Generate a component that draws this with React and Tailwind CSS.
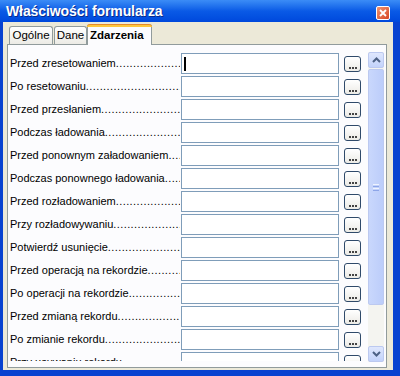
import React from "react";

const labels = [
  "Przed zresetowaniem",
  "Po resetowaniu",
  "Przed przesłaniem",
  "Podczas ładowania",
  "Przed ponownym załadowaniem",
  "Podczas ponownego ładowania",
  "Przed rozładowaniem",
  "Przy rozładowywaniu",
  "Potwierdź usunięcie",
  "Przed operacją na rekordzie",
  "Po operacji na rekordzie",
  "Przed zmianą rekordu",
  "Po zmianie rekordu",
  "Przy usuwaniu rekordu",
];

const DOTS = ".".repeat(80);

function Row({ label, first }) {
  return (
    <div className="flex items-center h-[23px] shrink-0">
      <div className="flex-1 min-w-0 flex whitespace-nowrap overflow-hidden text-[11px] text-black">
        <span>{label}</span>
        <span className="flex-1 overflow-hidden tracking-[0.4px]">{DOTS}</span>
      </div>
      <div className="ml-[1px] w-[158px] h-[21px] border border-[#7f9db9] bg-white flex items-center">
        {first && <div className="ml-[2px] w-[2px] h-[14px] bg-black" />}
      </div>
      <div className="ml-[5px] w-[17px] h-[16px] rounded-[3px] border border-[#2f4a6a] bg-gradient-to-b from-white to-[#ecebe6] flex items-end justify-center pb-[2px]">
        <div className="flex gap-[1px]">
          <div className="w-[2px] h-[2px] bg-[#444]" />
          <div className="w-[2px] h-[2px] bg-[#444]" />
          <div className="w-[2px] h-[2px] bg-[#444]" />
        </div>
      </div>
    </div>
  );
}

function Chevron({ down }) {
  return (
    <svg width="9" height="6" viewBox="0 0 9 6">
      <path
        d={down ? "M1 1 L4.5 4.5 L8 1" : "M1 5 L4.5 1.5 L8 5"}
        fill="none"
        stroke="#4d6185"
        strokeWidth="2"
      />
    </svg>
  );
}

function ScrollBar() {
  return (
    <div className="w-[16px] ml-[7px] mr-[2px] mt-[7px] mb-[5px] flex flex-col bg-[#f4f4f0]">
      <div className="h-[16px] shrink-0 rounded-[2px] border border-[#bcc9f0] bg-gradient-to-b from-[#dfe7fd] to-[#c3d3fb] flex items-center justify-center">
        <Chevron />
      </div>
      <div className="h-[236px] shrink-0 mt-[1px] rounded-[2px] border border-[#bcc9f0] bg-gradient-to-r from-[#c9d7fc] to-[#bccdfa] flex items-center justify-center">
        <div className="flex flex-col gap-[1px]">
          <div className="w-[6px] h-[1px] bg-[#eef3ff]" />
          <div className="w-[6px] h-[1px] bg-[#8da5e8]" />
          <div className="w-[6px] h-[1px] bg-[#eef3ff]" />
          <div className="w-[6px] h-[1px] bg-[#8da5e8]" />
        </div>
      </div>
      <div className="flex-1" />
      <div className="h-[16px] shrink-0 rounded-[2px] border border-[#bcc9f0] bg-gradient-to-b from-[#dfe7fd] to-[#c3d3fb] flex items-center justify-center">
        <Chevron down />
      </div>
    </div>
  );
}

export default function App() {
  return (
    <div
      className="w-[400px] h-[376px] flex flex-col bg-[#0842d0] overflow-hidden"
      style={{ fontFamily: '"Liberation Sans", Arial, sans-serif' }}
    >
      {/* title bar */}
      <div className="h-[22px] shrink-0 flex items-center pl-[6px] pr-[10px] bg-gradient-to-b from-[#3b8cf6] via-[#0a5ae6] to-[#0048dc]">
        <span className="text-white font-bold text-[14px] leading-none tracking-[-0.1px] [text-shadow:1px_1px_0_#0a2a8a]">
          Właściwości formularza
        </span>
        <div className="ml-auto mt-[3px] w-[14px] h-[14px] rounded-[2px] border border-white bg-gradient-to-br from-[#f0926e] to-[#d64320] flex items-center justify-center">
          <svg width="8" height="8" viewBox="0 0 8 8">
            <path d="M1 1 L7 7 M7 1 L1 7" stroke="white" strokeWidth="1.8" />
          </svg>
        </div>
      </div>

      {/* body */}
      <div className="flex-1 ml-[3px] mr-[7px] mb-[6px] bg-[#ece9d8] flex flex-col min-h-0">
        {/* tabs */}
        <div className="h-[22px] shrink-0 flex items-end pl-[6px] relative z-10 text-[11.5px] text-black">
          <div className="h-[18px] w-[44px] border border-b-0 border-[#919b9c] rounded-t-[3px] bg-gradient-to-b from-white to-[#ecebe5] flex items-center justify-center">
            Ogólne
          </div>
          <div className="h-[18px] w-[33px] ml-[1px] border border-b-0 border-[#919b9c] rounded-t-[3px] bg-gradient-to-b from-white to-[#ecebe5] flex items-center justify-center">
            Dane
          </div>
          <div className="h-[21px] -mb-[1px] w-[65px] border-x border-[#919b9c] rounded-t-[3px] bg-[#fcfcfe] flex flex-col">
            <div className="h-[3px] -mx-[1px] rounded-t-[3px] bg-[#ffc83c] border-t border-[#e68b2c]" />
            <div className="flex-1 flex items-center pl-[2px] font-bold">Zdarzenia</div>
          </div>
        </div>

        {/* panel */}
        <div className="flex-1 min-h-0 ml-[4px] mr-[6px] mb-[2px] border border-[#919b9c] bg-[#fcfcfe] flex overflow-hidden">
          <div className="w-[351px] ml-[2px] mt-[7px] mb-[6px] flex flex-col shrink-0 overflow-hidden">
            {labels.map((l, i) => (
              <Row key={i} label={l} first={i === 0} />
            ))}
          </div>
          <ScrollBar />
        </div>
      </div>
    </div>
  );
}
